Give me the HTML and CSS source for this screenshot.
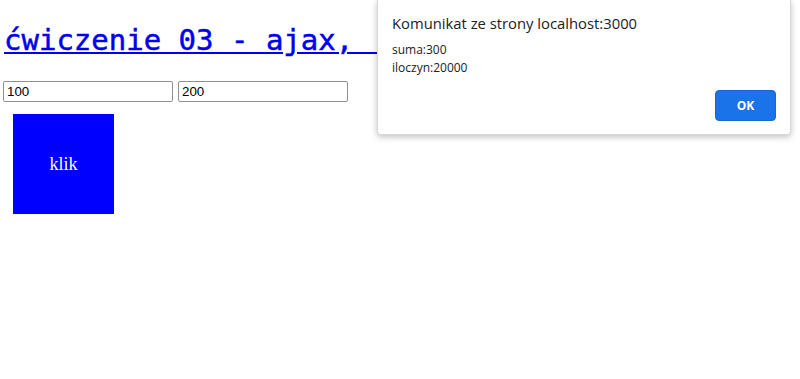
FILE: index.html
```html
<!DOCTYPE html>
<html lang="pl">
<head>
    <meta charset="UTF-8">
    <meta name="viewport" content="width=device-width, initial-scale=1.0">
    <title>ćwiczenie 03 - ajax</title>
    <link rel="stylesheet" href="styles.css">
</head>
<body>
    <h1 class="title"><a href="#">ćwiczenie 03 - ajax,&nbsp;&nbsp;</a></h1>

    <div class="inputs">
        <input type="text" id="a" value="100">
        <input type="text" id="b" value="200">
    </div>

    <div class="klik">klik</div>

    <!-- alert dialog -->
    <div class="dialog">
        <div class="dialog-title">Komunikat ze strony localhost:3000</div>
        <div class="dialog-msg">suma:300</div>
        <div class="dialog-msg">iloczyn:20000</div>
        <div class="dialog-actions">
            <button class="ok">OK</button>
        </div>
    </div>
</body>
</html>
```

FILE: styles.css
```css
/* Basic styling */
body {
    margin: 0 3px;
    background: white;
}

.title {
    margin: 23px 0 24px 1px;
    font-family: "DejaVu Sans Mono", monospace;
    font-size: 29px;
    font-weight: normal;
    -webkit-text-stroke: 0.5px #0000ee;
    white-space: nowrap;
    overflow: hidden;
}

.title a {
    color: #0000ee;
}

.inputs {
    display: flex;
    gap: 5px;
}

.inputs input {
    width: 170px;
    height: 21px;
    box-sizing: border-box;
    padding: 1px 3px;
    border: 1px solid #8f8f8f;
    border-radius: 2px;
    font-family: "Liberation Sans", Arial, sans-serif;
    font-size: 13.33px;
    color: black;
}

.klik {
    width: 101px;
    height: 100px;
    margin: 12px 10px;
    background: blue;
    color: white;
    font-family: "Liberation Serif", serif;
    font-size: 18px;
    display: flex;
    align-items: center;
    justify-content: center;
}

.dialog {
    position: absolute;
    left: 377px;
    top: 0;
    width: 414px;
    height: 135px;
    box-sizing: border-box;
    padding: 13px 14px 0 14px;
    background: white;
    border: 1px solid #d8d8d8;
    border-top: none;
    border-radius: 0 0 4px 4px;
    box-shadow: 0 2px 6px rgba(0, 0, 0, 0.25);
    font-family: "Open Sans", "Noto Sans", sans-serif;
    color: #202124;
}

.dialog-title {
    font-size: 14.8px;
    line-height: 20px;
    margin-bottom: 8px;
}

.dialog-msg {
    font-size: 12px;
    line-height: 18px;
}

.dialog-actions {
    display: flex;
    justify-content: flex-end;
    margin-top: 13px;
}

.ok {
    width: 61px;
    height: 31px;
    background: #1a73e8;
    color: white;
    border: 1px solid #1967d2;
    border-radius: 4px;
    font-family: "Open Sans", "Noto Sans", sans-serif;
    font-size: 12px;
    font-weight: bold;
    cursor: pointer;
}
```
